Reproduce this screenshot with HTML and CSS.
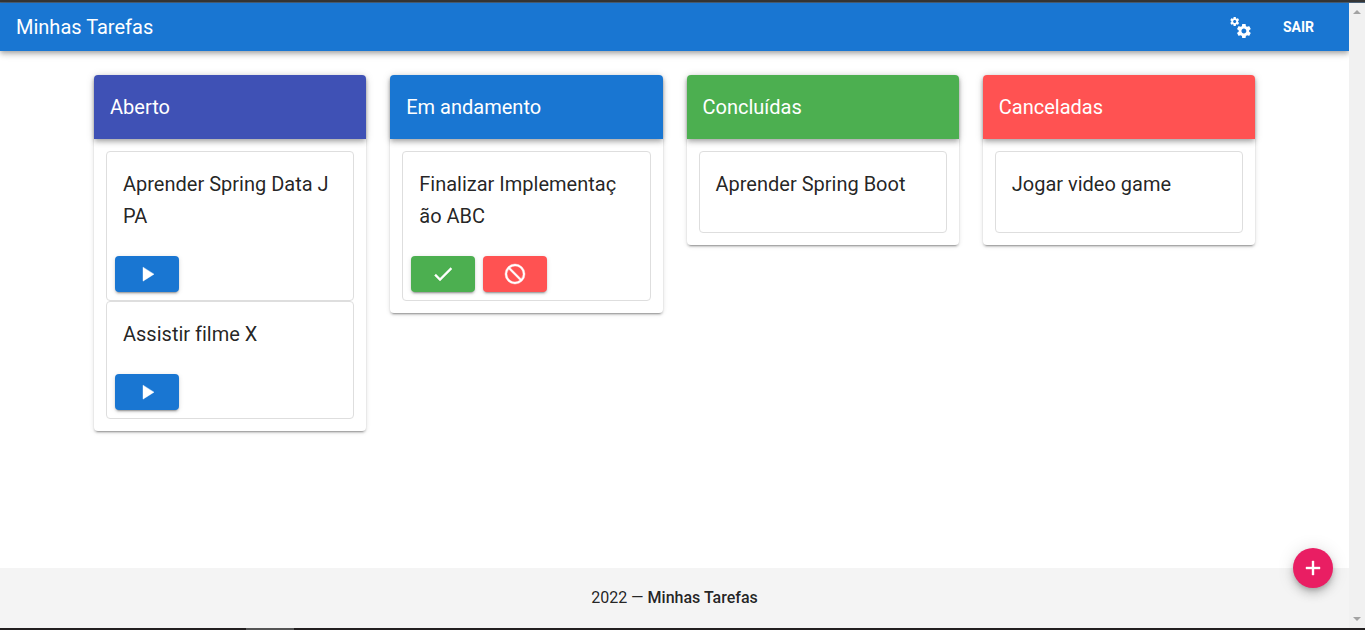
FILE: index.html
```html
<!DOCTYPE html>
<html lang="pt-BR">
<head>
<meta charset="utf-8">
<meta name="viewport" content="width=device-width, initial-scale=1">
<title>Minhas Tarefas</title>
<link rel="stylesheet" href="styles.css">
</head>
<body>
<div class="edge edge-top"></div>
<div class="window">
  <div class="app">
    <header class="toolbar">
      <h1 class="toolbar-title">Minhas Tarefas</h1>
      <button class="icon-button" type="button" aria-label="Configurações">
        <svg viewBox="0 0 24 24" width="24" height="24" aria-hidden="true"><path fill="currentColor" d="M15.9 18.45C17.25 18.45 18.35 17.35 18.35 16C18.35 14.65 17.25 13.55 15.9 13.55C14.54 13.55 13.45 14.65 13.45 16C13.45 17.35 14.54 18.45 15.9 18.45M21.1 16.68L22.58 17.84C22.71 17.95 22.75 18.13 22.66 18.29L21.26 20.71C21.17 20.86 21 20.92 20.83 20.86L19.09 20.16C18.73 20.44 18.33 20.67 17.91 20.85L17.64 22.7C17.62 22.87 17.47 23 17.3 23H14.5C14.32 23 14.18 22.87 14.15 22.7L13.89 20.85C13.46 20.67 13.07 20.44 12.71 20.16L10.96 20.86C10.81 20.92 10.62 20.86 10.54 20.71L9.14 18.29C9.05 18.13 9.09 17.95 9.22 17.84L10.7 16.68L10.65 16L10.7 15.31L9.22 14.16C9.09 14.05 9.05 13.86 9.14 13.71L10.54 11.29C10.62 11.13 10.81 11.07 10.96 11.13L12.71 11.84C13.07 11.56 13.46 11.32 13.89 11.15L14.15 9.29C14.18 9.13 14.32 9 14.5 9H17.3C17.47 9 17.62 9.13 17.64 9.29L17.91 11.15C18.33 11.32 18.73 11.56 19.09 11.84L20.83 11.13C21 11.07 21.17 11.13 21.26 11.29L22.66 13.71C22.75 13.86 22.71 14.05 22.58 14.16L21.1 15.31L21.15 16L21.1 16.68M6.69 8.07C7.56 8.07 8.26 7.37 8.26 6.5C8.26 5.63 7.56 4.92 6.69 4.92C5.82 4.92 5.12 5.63 5.12 6.5C5.12 7.37 5.82 8.07 6.69 8.07M10.03 6.94L11 7.68C11.07 7.75 11.09 7.87 11.03 7.97L10.13 9.53C10.08 9.63 9.96 9.67 9.86 9.63L8.74 9.18L8 9.62L7.81 10.81C7.79 10.92 7.7 11 7.59 11H5.79C5.67 11 5.58 10.92 5.56 10.81L5.4 9.62L4.64 9.18L3.52 9.63C3.41 9.67 3.3 9.63 3.24 9.53L2.34 7.97C2.28 7.87 2.31 7.75 2.39 7.68L3.34 6.94L3.31 6.5L3.34 6.06L2.39 5.32C2.31 5.25 2.28 5.13 2.34 5.03L3.24 3.47C3.3 3.37 3.41 3.33 3.52 3.37L4.63 3.82L5.4 3.38L5.56 2.19C5.58 2.08 5.67 2 5.79 2H7.59C7.7 2 7.79 2.08 7.81 2.19L8 3.38L8.74 3.82L9.86 3.37C9.96 3.33 10.08 3.37 10.13 3.47L11.03 5.03C11.09 5.13 11.07 5.25 11 5.32L10.03 6.06L10.06 6.5L10.03 6.94Z"/></svg>
      </button>
      <button class="text-button" type="button">Sair</button>
    </header>

    <main class="board">
      <section class="column">
        <h2 class="column-title open">Aberto</h2>
        <div class="tasks">
          <article class="task">
            <h3 class="task-title">Aprender Spring Data JPA</h3>
            <div class="actions">
              <button class="action start" type="button" aria-label="Iniciar"><svg viewBox="0 0 24 24" width="24" height="24" aria-hidden="true"><path fill="currentColor" stroke="currentColor" stroke-width=".4" d="M8 5.14V19.14L19 12.14L8 5.14Z"/></svg></button>
            </div>
          </article>
          <article class="task">
            <h3 class="task-title">Assistir filme X</h3>
            <div class="actions">
              <button class="action start" type="button" aria-label="Iniciar"><svg viewBox="0 0 24 24" width="24" height="24" aria-hidden="true"><path fill="currentColor" stroke="currentColor" stroke-width=".4" d="M8 5.14V19.14L19 12.14L8 5.14Z"/></svg></button>
            </div>
          </article>
        </div>
      </section>

      <section class="column">
        <h2 class="column-title progress">Em andamento</h2>
        <div class="tasks">
          <article class="task">
            <h3 class="task-title">Finalizar Implementaç<br>ão ABC</h3>
            <div class="actions">
              <button class="action finish" type="button" aria-label="Concluir"><svg viewBox="0 0 24 24" width="24" height="24" aria-hidden="true"><path fill="currentColor" stroke="currentColor" stroke-width=".4" d="M21 7L9 19L3.5 13.5L4.91 12.09L9 16.17L19.59 5.59L21 7Z"/></svg></button>
              <button class="action cancel" type="button" aria-label="Cancelar"><svg viewBox="0 0 24 24" width="24" height="24" aria-hidden="true"><path fill="currentColor" stroke="currentColor" stroke-width=".4" d="M12 2A10 10 0 1 0 12 22A10 10 0 1 0 12 2M12 4A8 8 0 0 1 18.31 16.9L7.1 5.69A8 8 0 0 1 12 4M12 20A8 8 0 0 1 5.69 7.1L16.9 18.31A8 8 0 0 1 12 20Z"/></svg></button>
            </div>
          </article>
        </div>
      </section>

      <section class="column">
        <h2 class="column-title done">Concluídas</h2>
        <div class="tasks">
          <article class="task">
            <h3 class="task-title">Aprender Spring Boot</h3>
            <div class="actions"></div>
          </article>
        </div>
      </section>

      <section class="column">
        <h2 class="column-title canceled">Canceladas</h2>
        <div class="tasks">
          <article class="task">
            <h3 class="task-title">Jogar video game</h3>
            <div class="actions"></div>
          </article>
        </div>
      </section>
    </main>

    <footer class="footer">
      <p class="footer-text">2022 — <strong>Minhas Tarefas</strong></p>
      <button class="fab" type="button" aria-label="Nova tarefa"><svg viewBox="0 0 24 24" width="24" height="24" aria-hidden="true"><path fill="currentColor" stroke="currentColor" stroke-width=".4" d="M19 13H13V19H11V13H5V11H11V5H13V11H19V13Z"/></svg></button>
    </footer>
  </div>
  <div class="scrollbar" aria-hidden="true">
    <svg viewBox="0 0 8 4" width="8" height="4"><path fill="#a3a3a3" d="M0 4L4 0L8 4Z"/></svg>
    <svg viewBox="0 0 8 4" width="8" height="4"><path fill="#a3a3a3" d="M0 0L4 4L8 0Z"/></svg>
  </div>
</div>
<div class="edge edge-bottom"><span class="edge-tab"></span></div>
</body>
</html>
```
FILE: styles.css
```css
* {
  box-sizing: border-box;
}

body {
  margin: 0;
  min-height: 100vh;
  display: flex;
  flex-direction: column;
  background: #fff;
  color: rgba(0, 0, 0, 0.87);
  font-family: Roboto, "Liberation Sans", sans-serif;
  font-size: 16px;
  line-height: 24px;
}

h1, h2, h3, p {
  margin: 0;
}

button {
  display: flex;
  align-items: center;
  justify-content: center;
  padding: 0;
  border: 0;
  font: inherit;
  color: #fff;
  cursor: pointer;
}

.edge {
  display: flex;
  background: #363636;
}

.edge-top {
  height: 3px;
  border-bottom: 1px solid #4a6076;
}

.edge-bottom {
  height: 2px;
  padding-left: 18%;
  background: #221f20;
}

.edge-tab {
  width: 48px;
  background: #555;
}

.window {
  flex: 1;
  display: flex;
}

.app {
  flex: 1;
  min-width: 0;
  display: flex;
  flex-direction: column;
}

.scrollbar {
  width: 16px;
  padding: 7px 0;
  display: flex;
  flex-direction: column;
  align-items: center;
  justify-content: space-between;
  background: #f1f1f1;
}

.toolbar {
  height: 48px;
  padding: 0 16px;
  display: flex;
  align-items: center;
  background: #1976d2;
  color: #fff;
  box-shadow: 0 2px 4px -1px rgba(0, 0, 0, 0.2), 0 4px 5px rgba(0, 0, 0, 0.14), 0 1px 10px rgba(0, 0, 0, 0.12);
}

.toolbar-title {
  flex: 1;
  font-size: 20px;
  font-weight: 400;
}

.icon-button {
  width: 48px;
  height: 48px;
  border-radius: 50%;
  background: transparent;
}

.text-button {
  min-width: 69px;
  height: 36px;
  padding: 0 16px;
  background: transparent;
  font-size: 14px;
  font-weight: 700;
  text-transform: uppercase;
}

.board {
  flex: 1;
  width: 100%;
  max-width: 1185px;
  margin: 0 auto;
  padding: 24px 12px;
  display: grid;
  grid-template-columns: repeat(4, minmax(0, 1fr));
  align-items: start;
  gap: 24px;
}

.column {
  border-radius: 4px;
  background: #fff;
  box-shadow: 0 3px 1px -2px rgba(0, 0, 0, 0.2), 0 2px 2px rgba(0, 0, 0, 0.14), 0 1px 5px rgba(0, 0, 0, 0.12);
}

.column-title {
  padding: 20px 16px;
  border-radius: 4px 4px 0 0;
  color: #fff;
  font-size: 20px;
  font-weight: 400;
  box-shadow: 0 2px 4px -1px rgba(0, 0, 0, 0.2), 0 4px 5px rgba(0, 0, 0, 0.14), 0 1px 10px rgba(0, 0, 0, 0.12);
}

.open {
  background: #3f51b5;
}

.progress,
.start {
  background: #1976d2;
}

.done,
.finish {
  background: #4caf50;
}

.canceled,
.cancel {
  background: #ff5252;
}

.tasks {
  padding: 12px;
}

.task {
  border: 1px solid #dedede;
  border-radius: 4px;
}

.task-title {
  padding: 16px;
  font-size: 20px;
  font-weight: 400;
  font-variant-ligatures: none;
  line-height: 32px;
  word-break: break-all;
}

.actions {
  display: flex;
  gap: 8px;
  padding: 8px;
}

.action {
  width: 64px;
  height: 36px;
  border-radius: 4px;
  box-shadow: 0 3px 1px -2px rgba(0, 0, 0, 0.2), 0 2px 2px rgba(0, 0, 0, 0.14), 0 1px 5px rgba(0, 0, 0, 0.12);
}

.footer {
  position: relative;
  padding: 18px 16px;
  background: #f4f4f4;
  text-align: center;
}

.footer-text strong {
  font-weight: 500;
}

.fab {
  position: absolute;
  top: -20px;
  right: 16px;
  width: 40px;
  height: 40px;
  border-radius: 50%;
  background: #e91e63;
  box-shadow: 0 3px 5px -1px rgba(0, 0, 0, 0.2), 0 6px 10px rgba(0, 0, 0, 0.14), 0 1px 18px rgba(0, 0, 0, 0.12);
}
```
